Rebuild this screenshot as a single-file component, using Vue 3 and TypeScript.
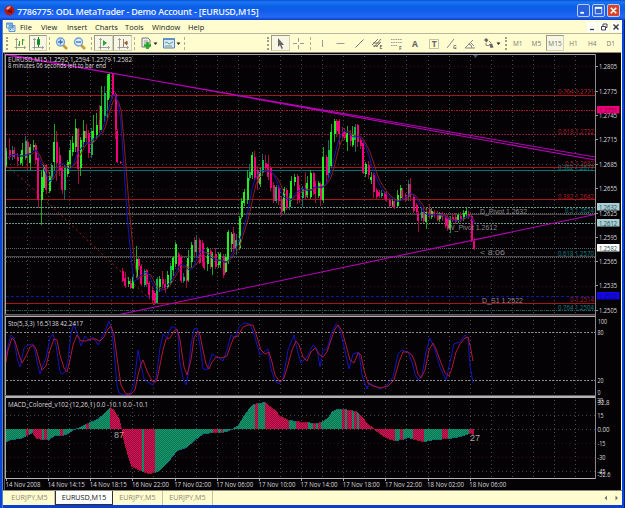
<script setup lang="ts">
import { computed, ref } from "vue"

type Tool = { id: string; w: number; pressed?: boolean; label?: string }
type Point = [number, number]
type Label = { text: string; x: number; y: number; w: number; cls?: string; box?: string }
type Level = { y: number; cls: string }

const menus = ["File", "View", "Insert", "Charts", "Tools", "Window", "Help"]

const tools: Tool[] = [
  { id: "grip", w: 6 },
  { id: "bars", w: 18.5 },
  { id: "candles", w: 18.5, pressed: true },
  { id: "sep", w: 5 },
  { id: "zoomin", w: 18 },
  { id: "zoomout", w: 18 },
  { id: "sep", w: 6 },
  { id: "scroll", w: 19, pressed: true },
  { id: "shift", w: 18.5, pressed: true },
  { id: "sep", w: 5 },
  { id: "order", w: 24 },
  { id: "template", w: 22 },
  { id: "sep", w: 4.5 },
  { id: "space", w: 78 },
  { id: "grip", w: 6 },
  { id: "cursor", w: 18.5, pressed: true },
  { id: "cross", w: 18.5 },
  { id: "sep", w: 5 },
  { id: "vline", w: 18.5 },
  { id: "hline", w: 18.5 },
  { id: "trend", w: 18.5 },
  { id: "channel", w: 18.5 },
  { id: "fibo", w: 18.5 },
  { id: "text", w: 18.5 },
  { id: "label", w: 18.5 },
  { id: "gann", w: 18.5 },
  { id: "angle", w: 18.5 },
  { id: "shapes", w: 24 },
  { id: "grip", w: 5 },
  { id: "period", w: 18.6, label: "M1" },
  { id: "period", w: 18.6, label: "M5" },
  { id: "period", w: 18.6, label: "M15", pressed: true },
  { id: "period", w: 18.6, label: "H1" },
  { id: "period", w: 18.6, label: "H4" },
  { id: "period", w: 18.6, label: "D1" },
]

const tabs = ["EURJPY,M5", "EURUSD,M15", "EURJPY,M5", "EURJPY,M5"]
const activeTab = ref(1)

// open, close, high, low in chart pixels, one bar per entry
const bars = `165 151 148 167|150 157 138 160|156 150 146 160|150 157 147 159|157 161 153 166|163 157 154 165|159 150 143 166|158 141 136 160|142 154 139 170|163 147 144 170|147 145 140 151|145 160 143 164|158 200 156 208|200 177 170 225|188 167 165 192|165 190 164 194|191 176 172 193|180 165 163 182|162 142 124 170|142 163 131 181|155 170 147 176|168 190 166 194|190 168 165 200|174 162 160 177|164 150 140 168|152 143 136 156|147 128 119 152|129 169 128 184|168 140 137 176|142 131 120 147|131 138 124 142|133 153 130 158|155 131 128 158|138 131 115 142|135 125 113 139|120 130 105 133|130 106 86 132|116 93 86 122|100 76 74 118|90 74 73 98|74 95 73 99|94 130 92 139|131 162 129 163|162 163 161 164
271 281 268 282|278 286 272 288|284 281 277 287|283 288 279 289|288 277 274 289|277 259 246 278|259 266 258 270|266 284 264 286|285 271 269 287|270 284 269 287|283 295 281 299|290 300 286 303|293 303 291 305|303 279 277 304|287 279 276 292|279 284 271 288|284 289 279 293|287 275 271 289|283 266 263 285|270 258 256 276|264 244 242 267|254 266 252 270|257 281 255 283|281 277 273 283|270 281 264 288|280 258 250 282|262 245 242 268|240 252 237 256|252 240 235 256|240 263 238 264|243 262 240 266|262 268 255 270|264 249 247 271|251 266 249 269|267 254 252 275|254 267 248 269|265 262 252 268|263 254 252 268|256 275 254 278|272 257 254 273|262 232 230 264|244 234 232 252|233 249 227 253|249 240 234 255|248 218 216 250|217 201 198 219|203 192 189 206|200 178 170 204|178 172 164 181|175 155 152 179|157 178 151 182|170 183 166 190|184 172 168 187|173 160 154 176|163 168 155 172|164 177 155 180|168 188 166 191|185 201 182 203|201 187 185 203|188 201 185 205|199 212 196 216|211 189 187 213|190 208 188 210|207 196 193 210|198 181 176 201|182 177 174 186|176 200 174 204|188 200 185 203|198 189 186 207|185 197 172 200|195 183 176 198|197 173 170 199|173 191 172 195|183 194 181 203|196 183 181 198|184 200 182 206|200 157 147 203|157 175 155 182|173 150 140 178|166 132 124 168|134 121 119 142|121 131 119 137|121 134 119 145|133 136 127 138|132 138 128 140|142 133 126 151|135 141 130 146|145 134 126 147|140 127 124 152|125 142 124 147|140 146 138 149|143 173 141 174|174 164 162 177|165 175 161 179|180 177 172 184|175 192 173 198|190 197 188 199|192 196 190 198|196 193 190 198|194 197 191 199|193 200 191 202|200 206 198 208|205 201 199 207|201 208 200 209|206 195 190 207|198 188 185 201|190 197 188 200|195 200 193 202|197 184 180 201|184 197 178 201|197 211 195 213|205 212 203 214|213 221 211 232|218 212 208 221|211 221 207 223|222 212 207 229|209 215 204 219|217 211 208 219|212 215 210 218|214 220 211 221|219 214 212 222|213 217 212 221|216 226 215 228|218 229 214 231|228 218 216 233|217 220 214 222|217 222 213 224|221 215 213 223|216 219 212 222|219 213 210 221|214 211 208 217|214 216 211 219|216 241 214 242|241 249 238 250`
  .split(/[|\n]/)
  .map((row) => row.trim().split(" ").map(Number))

const STEP = 2.64
const candles = bars.map(([open, close, high, low], i) => ({
  x: Math.round(6.3 + i * STEP),
  top: Math.min(open, close),
  height: Math.max(1, Math.abs(open - close)),
  high,
  range: low - high,
  cls: close < open ? (i % 5 === 2 ? "teal" : "up") : "down",
}))

function average(period: number, offset: number): string {
  return bars
    .map((_, i) => {
      const slice = bars.slice(Math.max(0, i - period + 1), i + 1)
      const avg = slice.reduce((sum, b) => sum + (b[0] + b[1]) / 2, 0) / slice.length
      return `${(7 + offset + i * STEP).toFixed(1)},${avg.toFixed(1)}`
    })
    .join(" ")
}

const fastMa = average(5, 0)
const slowMa = average(6, 1)

const stochMain = "6,356 8,346 11,335 14,338 17,358 20,367 24,348 28,345 33,344 35,351 37,362 40,374 43,365 46,358 50,338 53,334 56,345 60,372 62,374 65,372 68,360 71,333 74,324 77,333 81,346 85,336 89,341 93,337 98,345 102,337 105,331 109,321 112,332 114,350 117,385 119,393 124,395 130,394 134,385 138,350 141,365 144,379 149,383 153,385 156,378 160,348 163,334 167,338 171,327 175,327 178,335 180,363 183,378 186,385 188,375 191,345 194,329 197,328 200,345 203,369 207,370 212,354 217,357 223,361 227,350 231,335 235,338 239,327 244,323 250,324 254,334 260,355 268,349 271,369 275,381 279,384 283,379 288,350 294,335 297,349 301,363 307,357 313,345 317,349 320,367 323,350 327,349 332,332 336,324 339,327 343,342 349,369 353,354 359,352 362,375 367,389 369,383 380,389 387,385 393,377 398,354 402,350 408,352 412,362 415,374 418,380 422,375 426,352 430,338 435,350 440,367 446,380 450,362 454,344 460,342 465,335 468,339 470,365 473,383"
const stochSignal = "6,362 8,350 12,338 15,341 19,355 22,363 26,356 30,347 33,345 36,349 39,360 42,370 46,366 50,350 54,339 57,340 60,355 64,368 67,372 70,360 73,345 77,335 81,341 86,341 90,339 95,339 100,341 104,337 108,329 111,326 114,335 118,365 121,385 126,394 131,394 135,390 138,375 141,364 143,360 147,371 152,381 156,382 158,375 163,350 166,339 170,338 174,331 177,329 180,340 184,367 187,375 191,360 194,338 198,331 200,335 203,350 206,364 209,369 212,362 216,357 222,358 227,356 230,347 234,337 238,336 243,327 248,325 253,325 256,334 261,350 265,354 269,352 272,362 275,375 280,382 284,378 288,365 292,350 296,341 299,345 303,357 307,361 311,352 315,348 319,354 323,357 327,352 331,340 335,329 338,325 342,331 346,345 350,360 354,363 358,353 361,355 364,370 368,383 373,386 381,388 388,386 394,380 399,362 403,352 408,352 412,355 415,362 418,374 421,378 425,370 429,350 433,343 436,349 440,360 445,373 449,376 452,368 456,352 460,344 465,338 468,337 471,350 473,361"

const ZERO = 429
const macd: Point[] = "6,442 10,440 20,439 26,436 32,433 36,439 44,440 49,440 54,436 62,436 68,434 73,430 74,429 80,427 87,423 92,421 98,418 104,413 110,407 114,410 119,419 121,427 122,436 123,440 127,455 131,467 140,471 148,474 155,473 160,470 168,462 177,451 186,448 195,440 203,434 213,433 220,433 226,432 230,430 233,428 238,425 243,416 249,408 253,404 258,403 265,402 268,405 275,410 280,416 289,420 296,421 304,422 316,423 321,422 327,418 332,411 336,409 343,409 350,410 356,411 362,417 368,424 373,428 375,431 382,436 390,440 395,441 402,440 408,438 418,441 424,442 434,440 448,439 460,437 469,434 474,435"
  .split(" ")
  .map((p) => p.split(",").map(Number) as Point)

const redRanges: Point[] = [
  [26, 29], [33, 42], [44, 47], [60, 63], [86, 89], [110, 142], [144, 155], [213, 218], [221, 223],
  [255, 258], [265, 289], [296, 308], [313, 316], [318, 321], [342, 345], [347, 352], [354, 357],
  [359, 395], [400, 403], [413, 424], [442, 448], [469, 475],
]

const histogram = computed(() => {
  const out: { x: number; y: number; h: number; cls: string; tip: number }[] = []
  for (let x = 6; x < 474; x++) {
    const k = macd.findIndex((p) => p[0] > x)
    const [x0, y0] = macd[k - 1]
    const [x1, y1] = macd[k]
    const v = Math.round(y0 + ((y1 - y0) * (x - x0)) / (x1 - x0))
    const red = redRanges.some(([a, b]) => x >= a && x < b)
    out.push({
      x,
      y: Math.min(v, ZERO),
      h: Math.abs(v - ZERO),
      cls: red ? "hist-red" : "hist-green",
      tip: v > ZERO ? v - 1 : v,
    })
  }
  return out
})

const gridX = Array.from({ length: 27 }, (_, i) => Math.round(27 + i * 21.08) + 0.5)

const levels: Level[] = [
  { y: 66.5, cls: "dim" },
  { y: 91.5, cls: "grid" },
  { y: 115.5, cls: "dim" },
  { y: 140.5, cls: "dim" },
  { y: 164.5, cls: "grid" },
  { y: 189.5, cls: "dim" },
  { y: 237.5, cls: "dim" },
  { y: 261.5, cls: "grid" },
  { y: 286.5, cls: "dim" },
  { y: 95.5, cls: "fib" },
  { y: 110.5, cls: "resist" },
  { y: 134.5, cls: "fib-dot" },
  { y: 167.5, cls: "fib" },
  { y: 170.5, cls: "teal-line" },
  { y: 199.5, cls: "fib" },
  { y: 207.5, cls: "pivot" },
  { y: 213.5, cls: "gray-dot" },
  { y: 214.5, cls: "gray" },
  { y: 223.5, cls: "pivot" },
  { y: 248.5, cls: "gray-dot" },
  { y: 256.5, cls: "gray" },
  { y: 257.5, cls: "gray-dot" },
  { y: 296.5, cls: "support" },
  { y: 303.5, cls: "fib" },
  { y: 310.5, cls: "teal-dash" },
  { y: 332.5, cls: "bound" },
  { y: 380.5, cls: "bound" },
  { y: 415.5, cls: "grid" },
  { y: 429.5, cls: "grid" },
  { y: 443.5, cls: "dim" },
  { y: 457.5, cls: "dim" },
  { y: 471.5, cls: "grid" },
]

const axis: Label[] = [
  ...([[69, "1.2805"], [93.5, "1.2775"], [118, "1.2745"], [142, "1.2715"], [166.5, "1.2685"], [191, "1.2655"],
    [215.5, "1.2625"], [240, "1.2595"], [264, "1.2565"], [288, "1.2535"], [312.5, "1.2505"]] as [number, string][])
    .map(([y, text]) => ({ text, x: 599, y, w: 18 })),
  { text: "1.2751", x: 599, y: 112.5, w: 18, cls: "t-maroon", box: "#ec007c" },
  { text: "1.2632", x: 599, y: 209.5, w: 18, cls: "t-dark", box: "#a9cfd4" },
  { text: "1.2612", x: 599, y: 225.5, w: 18, cls: "t-dark", box: "#a9cfd4" },
  { text: "1.2582", x: 599, y: 250.5, w: 18, cls: "t-dark", box: "#ffffff" },
  { text: "1.2522", x: 599, y: 298.5, w: 18, cls: "t-navy", box: "#1408e6" },
  { text: "100", x: 598, y: 323.5, w: 9 },
  { text: "80", x: 597.5, y: 335, w: 6 },
  { text: "20", x: 597.5, y: 382.5, w: 6 },
  { text: "0", x: 597.5, y: 394.5, w: 3 },
  { text: "30", x: 597, y: 402.5, w: 6 },
  { text: "32.8", x: 597.5, y: 405, w: 12 },
  { text: "15", x: 597.5, y: 417.5, w: 6 },
  { text: "0.00", x: 597.5, y: 431.5, w: 12 },
  { text: "-15", x: 597.5, y: 445.5, w: 8 },
  { text: "-30", x: 597.5, y: 459.5, w: 8 },
  { text: "-45", x: 597.5, y: 473.5, w: 8 },
  { text: "-52.6", x: 597.5, y: 477, w: 13 },
]

const notes: Label[] = [
  { text: "EURUSD,M15  1.2592 1.2594 1.2579 1.2582", x: 8, y: 61.5, w: 124 },
  { text: "8 minutes 06 seconds left to bar end", x: 8, y: 68, w: 98 },
  { text: "Sto(5,3,3) 16.5138 42.2417", x: 8, y: 325.5, w: 75 },
  { text: "MACD_Colored_v102 (12,26,1) 0.0 -10.1 0.0 -10.1", x: 8, y: 406.5, w: 140 },
  { text: "0.764 1.2771", x: 558, y: 94, w: 36, cls: "t-red" },
  { text: "0.618 1.2722", x: 558, y: 133.5, w: 36, cls: "t-red" },
  { text: "0.5 1.2682", x: 565, y: 165.5, w: 29, cls: "t-red" },
  { text: "0.382 1.2677", x: 558, y: 170, w: 36, cls: "t-teal" },
  { text: "0.382 1.2642", x: 558, y: 198.5, w: 36, cls: "t-red" },
  { text: "0.5 1.2624", x: 565, y: 213, w: 29, cls: "t-teal" },
  { text: "0.618 1.2570", x: 558, y: 256, w: 36, cls: "t-teal" },
  { text: "0 1.2514", x: 570, y: 302, w: 24, cls: "t-red" },
  { text: "0.764 1.2504", x: 558, y: 309.5, w: 36, cls: "t-teal" },
  { text: "D_Pivot 1.2632", x: 480, y: 214, w: 47, cls: "t-gray" },
  { text: "W_Pivot 1.2612", x: 448, y: 230, w: 49, cls: "t-gray" },
  { text: "D_S1 1.2522", x: 482, y: 303, w: 41, cls: "t-gray" },
  { text: "< 8:06", x: 480, y: 255, w: 25, cls: "t-gray" },
]

const times = ["14 Nov 2008", "14 Nov 14:15", "14 Nov 18:15", "16 Nov 22:00", "17 Nov 02:00", "17 Nov 06:00",
  "17 Nov 10:00", "17 Nov 14:00", "17 Nov 18:00", "17 Nov 22:00", "18 Nov 02:00", "18 Nov 06:00"]
</script>

<template>
  <div class="window">
    <header class="title">
      <svg class="logo" viewBox="0 0 11 11">
        <circle cx="5.5" cy="5.5" r="5" fill="#b51a16" />
        <path d="M2 3.5Q4 .8 7 1.5L4 5z" fill="#f2a08a" />
        <path d="M3 7l2-3 1 2 2-2v4z" fill="#6e0808" />
      </svg>
      <span class="caption">7786775: ODL MetaTrader - Demo Account - [EURUSD,M15]</span>
      <span class="win-btn"><svg viewBox="0 0 12 12"><path d="M2.5 8.5h4" stroke="#fff" stroke-width="2" /></svg></span>
      <span class="win-btn"><svg viewBox="0 0 12 12"><path d="M2.5 3.5h7v6h-7z" fill="none" stroke="#dfe9ff" /><path d="M2 3h8" stroke="#fff" stroke-width="2" /></svg></span>
      <span class="win-btn close"><svg viewBox="0 0 12 12"><path d="M3 3l6 6M9 3l-6 6" stroke="#fff" stroke-width="1.7" /></svg></span>
    </header>

    <nav class="menu">
      <svg class="doc" viewBox="0 0 10 10">
        <path d="M.5 1h6v5h-6zM3 3.5h6v6H3z" fill="#d7e8fb" stroke="#5c96d4" />
        <path d="M1 2h5M4 5h4M4 7.5h1M6.5 7h1" stroke="#3e78c4" />
      </svg>
      <span v-for="m in menus" :key="m" :class="['menu-item', `m-${m.toLowerCase()}`]">{{ m }}</span>
      <span class="mdi first"><svg viewBox="0 0 10 10"><path d="M3 7.5h4" stroke="#333" stroke-width="1.3" /></svg></span>
      <span class="mdi"><svg viewBox="0 0 10 10"><path d="M4 4V2h4v3.5H7M2.5 4.5h4V8h-4z" fill="none" stroke="#444" /></svg></span>
      <span class="mdi"><svg viewBox="0 0 10 10"><path d="M2.5 2.5l5 5M7.5 2.5l-5 5" stroke="#333" stroke-width="1.4" /></svg></span>
    </nav>

    <div class="toolbar">
      <span
        v-for="(t, i) in tools"
        :key="i"
        :class="['tool', t.id, { pressed: t.pressed }]"
        :style="{ width: `${t.w}px` }"
      >
        <template v-if="t.label">{{ t.label }}</template>
        <svg v-else-if="t.id === 'order' || t.id === 'template' || t.id === 'shapes'" width="18" height="13" viewBox="0 0 18 13">
          <g v-if="t.id === 'order'">
            <path d="M2 1h6l2 2v7H2z" fill="#eef0e8" stroke="#777" />
            <path d="M4 4h4M4 6h3" stroke="#999" />
            <path d="M7.5 5v7M4 8.5h7" stroke="#25a725" stroke-width="2.6" />
          </g>
          <g v-else-if="t.id === 'template'">
            <path d="M.5 2h11v9H.5z" fill="#d6e7f6" stroke="#5782b5" />
            <path d="M0 2h12" stroke="#4e86cd" stroke-width="1.6" />
            <path d="M2 6l2-1 2 2 4-2M2 9h7" fill="none" stroke="#6f9b80" />
          </g>
          <g v-else fill="#666">
            <path d="M1 3l2-2 2.5 2-2 2.5zM6 7l3-.5 1.5 4-3 .5z" />
            <path d="M3 6v2.5h3M6 4l2 2" stroke="#888" fill="none" />
          </g>
          <path d="M13.5 5.5h4L15.5 8z" fill="#222" />
        </svg>
        <svg v-else-if="!['grip', 'sep', 'space'].includes(t.id)" width="13" height="13" viewBox="0 0 13 13">
          <g v-if="['bars', 'candles', 'scroll', 'shift'].includes(t.id)">
            <path d="M3.5 1.5v11M1.5 10.5h11M2 3l1.5-1.5L5 3M11 9l1.5 1.5L11 12" fill="none" stroke="#888" stroke-width=".8" />
            <path v-if="t.id === 'bars'" d="M6.5 4v5M5 8h1.5M9.5 2v6M9.5 3h2" stroke="#2c9c3c" fill="none" />
            <path v-else-if="t.id === 'candles'" d="M7.5 0v10M6.5 2.5h2v5h-2z" fill="#18c430" stroke="#168a28" />
            <path v-else-if="t.id === 'scroll'" d="M6 3l4 3-4 3z" fill="#28a63a" />
            <path v-else d="M7.5 2v8M12 6H9M11 4L8.5 6 11 8z" fill="#b5532a" stroke="#8d5a48" stroke-width=".8" />
          </g>
          <g v-else-if="t.id === 'zoomin' || t.id === 'zoomout'">
            <path d="M8 8l4 4" stroke="#c99b36" stroke-width="2.5" />
            <circle cx="5.5" cy="5" r="4" fill="#dcecfb" stroke="#6fa0dc" stroke-width="1.3" />
            <path :d="t.id === 'zoomin' ? 'M3 5h5M5.5 2.5v5' : 'M3 5h5'" stroke="#3b72bd" stroke-width="1.3" />
          </g>
          <path v-else-if="t.id === 'cursor'" d="M4 1v9l2-2 1.5 4 1.5-.7L7.5 8H10z" fill="#666" />
          <path v-else-if="t.id === 'cross'" d="M6.5 1v4M6.5 8v4M1 6.5h4M8 6.5h4" stroke="#999" />
          <path v-else-if="t.id === 'vline'" d="M6.5 3v7" stroke="#999" />
          <path v-else-if="t.id === 'hline'" d="M2.5 6.5h8" stroke="#999" />
          <path v-else-if="t.id === 'trend'" d="M2.5 10.5l8-8" stroke="#777" />
          <g v-else-if="t.id === 'channel'">
            <path d="M1 8l6-6M3 10l7-8M5 10l5-5M2 6h7M2 9h5" stroke="#666" stroke-width=".9" />
            <text x="8.5" y="12">E</text>
          </g>
          <g v-else-if="t.id === 'fibo'">
            <path d="M1 2.5h11M1 5.5h11M1 8.5h7" stroke="#999" stroke-dasharray="1.5 .8" />
            <text x="9" y="12.5">F</text>
          </g>
          <text v-else-if="t.id === 'text'" x="4" y="10" class="big">A</text>
          <g v-else-if="t.id === 'label'">
            <path d="M2.5 2.5h9v9h-9z" fill="none" stroke="#888" stroke-dasharray="1 1" />
            <text x="4.7" y="10" class="big">T</text>
          </g>
          <g v-else-if="t.id === 'gann'">
            <path d="M2 11l7-9" stroke="#888" />
            <text x="8" y="12">G</text>
          </g>
          <path v-else d="M1 11h10M1 11l8-8M4 7q4 0 4 4M6 5l4 4" fill="none" stroke="#888" />
        </svg>
      </span>
    </div>

    <main class="workspace">
      <svg class="chart" width="618" height="438" viewBox="3 52 618 438">
        <defs>
          <pattern id="green-mesh" width="2" height="2" patternUnits="userSpaceOnUse">
            <rect width="2" height="2" fill="#087078" />
            <path d="M0 0h1v1h-1zM1 1h1v1h-1z" fill="#1c9c44" />
          </pattern>
          <pattern id="red-mesh" width="2" height="2" patternUnits="userSpaceOnUse">
            <rect width="2" height="2" fill="#8a1720" />
            <path d="M0 0h1v1h-1zM1 1h1v1h-1z" fill="#e40874" />
          </pattern>
        </defs>

        <path v-for="x in gridX" :key="x" :d="`M${x} 56V478`" class="line vgrid" />
        <path v-for="(l, i) in levels" :key="i" :d="`M6 ${l.y}H595`" :class="['line', l.cls]" />

        <path d="M6 165L30 186L117 268L154 303" class="old-trend" />
        <g class="crisp">
          <g v-for="(c, i) in candles" :key="i" :class="c.cls">
            <rect :x="c.x" :y="c.high" width="1" :height="c.range" class="wick" />
            <rect :x="i % 3 ? c.x : c.x - 1" :y="c.top" width="2" :height="c.height" />
          </g>
        </g>
        <polyline :points="slowMa" class="ma-slow" />
        <polyline :points="fastMa" class="ma-fast" />
        <path d="M6 55L595 157M6 54L595 160M117 315L595 214.5" class="trend-line" />

        <polyline :points="stochMain" class="sto-main" />
        <polyline :points="stochSignal" class="sto-signal" />

        <g class="crisp">
          <g v-for="h in histogram" :key="h.x" :class="h.cls">
            <rect :x="h.x" :y="h.y" width="1" :height="h.h" />
            <rect :x="h.x" :y="h.tip" width="1" height="1" class="tip" />
          </g>
        </g>

        <g class="crisp">
          <path d="M3 52.5H621" stroke="#8c8880" />
          <path d="M4.5 53V490" stroke="#55504c" />
          <path d="M5.5 54V478.5M5 54.5H595" stroke="#a8a8a4" fill="none" />
          <path d="M5 314.5H595M5 395.5H595" stroke="#686068" />
          <path d="M5 315.5H595" stroke="#4c3c48" />
          <path d="M5 316.5H595M5 396.5H595M5 397.5H595M5 478.5H595" stroke="#b4b4b2" />
          <path d="M595.5 54V479" stroke="#8a8888" />
          <path v-for="a in axis.slice(0, 11)" :key="a.text" :d="`M596 ${Math.round(a.y - 3) + 0.5}h2`" stroke="#999" />
          <path v-for="(t, i) in times" :key="t" :d="`M${Math.round(6 + i * 42.16) + 0.5} 479v2`" stroke="#aaa" />
        </g>
        <path d="M473 55h5l-2.5 3z" fill="#4c5468" />

        <g v-for="(a, i) in axis" :key="`a${i}`">
          <rect v-if="a.box" x="597" :y="a.y - 6.5" width="22.5" height="7.5" :fill="a.box" />
          <text :x="a.x" :y="a.y" :textLength="a.w" lengthAdjust="spacingAndGlyphs" :class="a.cls">{{ a.text }}</text>
        </g>
        <text
          v-for="(n, i) in notes"
          :key="`n${i}`"
          :x="n.x"
          :y="n.y"
          :textLength="n.w"
          lengthAdjust="spacingAndGlyphs"
          :class="n.cls"
          xml:space="preserve"
        >{{ n.text }}</text>
        <text x="114" y="437.5" class="count">8<tspan fill="#e08a78">7</tspan></text>
        <text x="470" y="440.5" class="count">27</text>
        <text
          v-for="(t, i) in times"
          :key="t"
          :x="5.5 + i * 42.16"
          y="487"
          :textLength="i ? 37 : 35"
          lengthAdjust="spacingAndGlyphs"
        >{{ t }}</text>
      </svg>
    </main>

    <footer class="tabs">
      <span
        v-for="(t, i) in tabs"
        :key="i"
        :class="['tab', { active: i === activeTab }]"
        @click="activeTab = i"
      >{{ t }}</span>
      <svg class="arrows" width="20" height="8" viewBox="0 0 20 8">
        <path d="M5 1.5v5L2.5 4zM13.5 1.5v5L16 4z" fill="#777" />
      </svg>
    </footer>
  </div>
</template>

<style>
body {
  margin: 0;
  overflow: hidden;
}
</style>

<style scoped>
.window {
  box-sizing: border-box;
  width: 625px;
  height: 508px;
  padding: 0 3px 3px;
  display: flex;
  flex-direction: column;
  background: linear-gradient(90deg, #0845d4 0 2px, #4f83cf 2px 3px, #0a3fd0 3px 622px, #0b45dc 622px 624px, #001a9c 624px);
  font-family: "Open Sans", "Noto Sans", sans-serif;
}

.title {
  flex: none;
  height: 20px;
  margin: 0 -3px;
  padding: 1px 5px 0 4px;
  box-sizing: border-box;
  display: flex;
  align-items: center;
  background: linear-gradient(#0a50d0 0, #1b76f6 2px, #0b62e4 6px, #0f5cea 10px, #2468f6 17px, #0a3ec0 20px);
}

.logo {
  width: 11px;
  height: 11px;
  margin: 0 0 1px;
}

.caption {
  flex: 1;
  margin: 2px 0 0;
  font: 600 9px/12px "Open Sans", sans-serif;
  letter-spacing: -0.24px;
  color: #eef4ff;
  padding-left: 2px;
  white-space: nowrap;
}

.win-btn {
  box-sizing: border-box;
  width: 13px;
  height: 13px;
  margin-left: 2px;
  border: 1px solid #b8ccf4;
  border-radius: 2px;
  background: #2860e0;
}

.win-btn svg {
  display: block;
  width: 11px;
  height: 11px;
}

.win-btn.close {
  background: #d8442a;
}

.menu {
  flex: none;
  height: 13px;
  display: flex;
  align-items: center;
  background: #fffdcf;
  border-bottom: 1px solid #b9b79b;
  font-size: 7.5px;
  color: #222;
  padding: 0 1px 0 3px;
}

.doc {
  width: 10px;
  height: 10px;
  margin-right: 4px;
}

.menu-item {
  flex: none;
  width: 27px;
  line-height: 12px;
}

.menu-item.m-file {
  width: 21px;
}

.menu-item.m-view {
  width: 26px;
}

.menu-item.m-insert {
  width: 28px;
}

.menu-item.m-charts {
  width: 30px;
}

.menu-item.m-window {
  width: 36px;
}

.mdi {
  width: 10px;
  height: 10px;
  margin-left: 2px;
  background: #fff;
}

.mdi.first {
  margin-left: auto;
}

.mdi svg {
  display: block;
}

.toolbar {
  flex: none;
  height: 18px;
  box-sizing: border-box;
  padding: 1px 0 1px 1px;
  display: flex;
  align-items: stretch;
  background: #fffdcf;
}

.tool {
  flex: none;
  box-sizing: border-box;
  display: flex;
  align-items: center;
  justify-content: center;
  color: #777;
  font-size: 6.5px;
}

.tool svg text {
  font-size: 5px;
  font-weight: bold;
  fill: #666;
}

.tool svg text.big {
  font-size: 8.5px;
}

.pressed {
  background: #f8f7e4;
  border: 1px solid #d4d2b4;
  border-top-color: #9b9a86;
  border-left-color: #9b9a86;
}

.sep::before,
.grip::before {
  content: "";
  height: 13px;
  border-left: 1px dashed #b0ae94;
}

.grip::before {
  border-left: 2px dotted #a09e86;
}

.workspace {
  flex: none;
  height: 438px;
  background: #fffdcf;
}

.chart {
  display: block;
  background: #050205;
}

.chart text {
  font-size: 6.9px;
  fill: #dcdcdc;
}

.chart .t-red {
  fill: #b02028;
}

.chart .t-teal {
  fill: #0d8686;
}

.chart .t-gray {
  fill: #8c8c8c;
  font-family: "Liberation Sans", sans-serif;
}

.chart .t-dark {
  fill: #20484e;
}

.chart .t-maroon {
  fill: #7c1030;
}

.chart .t-navy {
  fill: #080878;
}

.chart .count {
  font: 9px "Liberation Sans", sans-serif;
  fill: #a8a8a8;
}

.crisp,
.line {
  shape-rendering: crispEdges;
}

.line {
  fill: none;
}

.vgrid {
  stroke: #4a4a4a;
  stroke-dasharray: 1 3;
}

.grid {
  stroke: #454545;
  stroke-dasharray: 1 3;
}

.dim {
  stroke: #3a1018;
  stroke-dasharray: 1 3;
}

.fib {
  stroke: #a8141c;
}

.fib-dot {
  stroke: #841838;
  stroke-dasharray: 2 1;
}

.resist {
  stroke: #b01434;
  stroke-dasharray: 2 1 1 1;
}

.teal-line {
  stroke: #087474;
}

.pivot {
  stroke: #689888;
  stroke-dasharray: 2 1;
}

.gray {
  stroke: #484848;
}

.gray-dot {
  stroke: #606060;
  stroke-dasharray: 1 1;
}

.support {
  stroke: #1414a8;
  stroke-dasharray: 3 2;
}

.teal-dash {
  stroke: #1c6060;
  stroke-dasharray: 3 1 1 1;
}

.bound {
  stroke: #8c8c8c;
  stroke-dasharray: 2 1.5;
}

.old-trend {
  fill: none;
  stroke: #a01c2c;
  stroke-dasharray: 2 3;
}

.up {
  fill: #20f020;
}

.up .wick {
  fill: #1ca81c;
}

.teal {
  fill: #14b850;
}

.teal .wick {
  fill: #0a6c68;
}

.down {
  fill: #f4007c;
}

.down .wick {
  fill: #a4103c;
}

.ma-fast,
.ma-slow,
.sto-main,
.sto-signal {
  fill: none;
  stroke: #1414bc;
}

.ma-slow {
  stroke: #8c2018;
}

.sto-signal {
  stroke: #b01834;
}

.trend-line {
  fill: none;
  stroke: #b800b8;
  stroke-width: 1.1;
}

.hist-green {
  fill: url(#green-mesh);
}

.hist-green .tip {
  fill: #087078;
}

.hist-red {
  fill: url(#red-mesh);
}

.hist-red .tip {
  fill: #8a1720;
}

.tabs {
  flex: none;
  height: 15px;
  display: flex;
  align-items: stretch;
  background: #fffdcf;
  box-sizing: border-box;
  border-top: 1px solid #8e8c7c;
  font-size: 7.2px;
  line-height: 13px;
  color: #8a8878;
  padding-left: 2px;
}

.tab {
  box-sizing: border-box;
  width: 50px;
  text-align: center;
  white-space: nowrap;
  border-right: 1px solid #c4c2a4;
}

.tab.active {
  width: 58px;
  background: #fff;
  color: #111;
  border-left: 1px solid #333;
  border-right: 1px solid #333;
  border-bottom: 1px solid #333;
}

.arrows {
  margin: 3px 0 0 auto;
}
</style>
